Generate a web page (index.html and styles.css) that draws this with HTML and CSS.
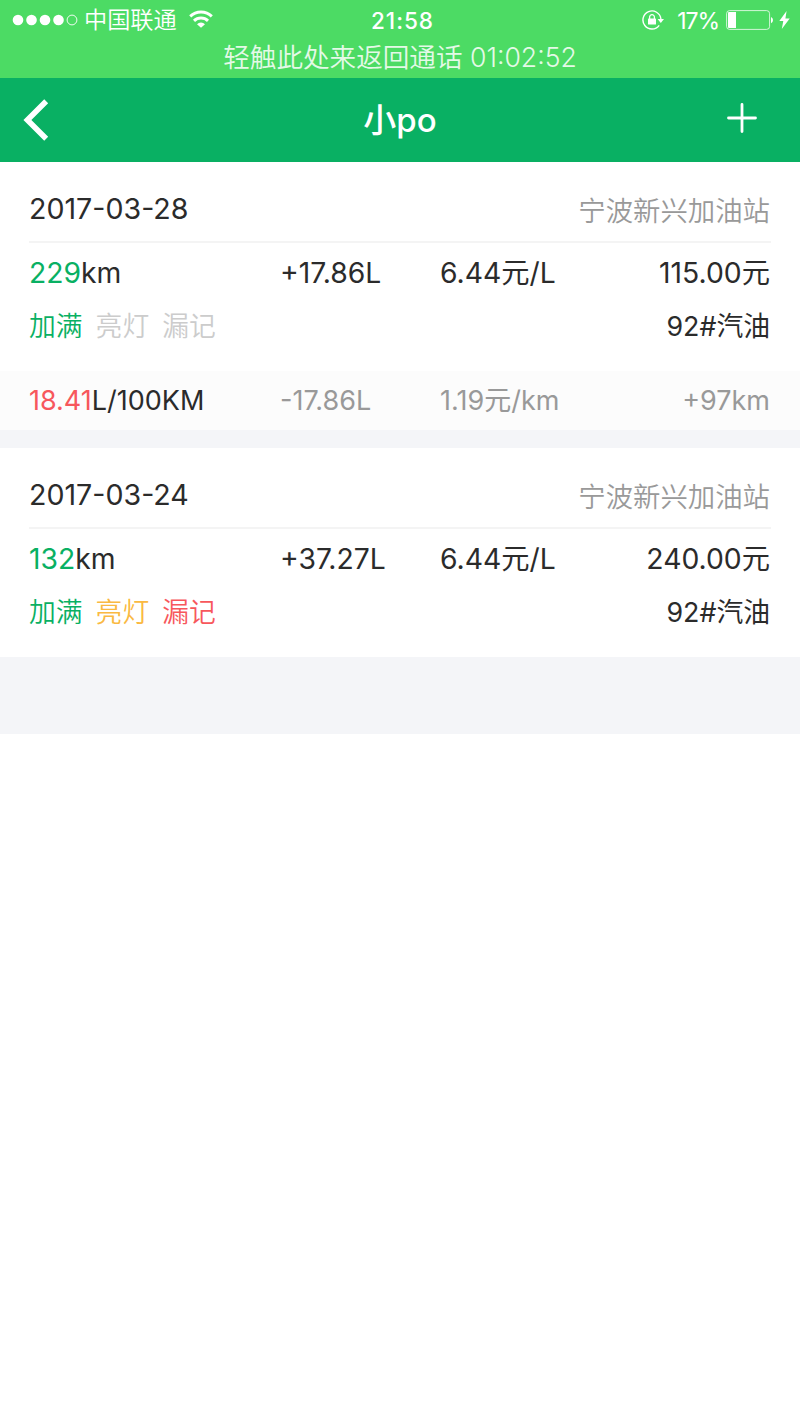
FILE: index.html
```
<!DOCTYPE html>
<html lang="zh-CN">
	<head>
		<meta charset="UTF-8">
		<title>小po</title>
		<link rel="stylesheet" href="styles.css">
	</head>
	<body>
		<div class="status">
			<div class="status-bar">
				<div class="status-left">
					<svg class="signal" width="66" height="12" viewBox="0 0 66 12">
						<g fill="#fff">
							<circle cx="6" cy="6" r="5.3"/>
							<circle cx="19.5" cy="6" r="5.3"/>
							<circle cx="33" cy="6" r="5.3"/>
							<circle cx="46.5" cy="6" r="5.3"/>
						</g>
						<circle cx="60" cy="6" r="4.9" fill="none" stroke="#fff" stroke-width="0.9"/>
					</svg>
					<span class="carrier">中国联通</span>
					<svg class="wifi" width="24" height="18" viewBox="0 0 24 18">
						<g fill="none" stroke="#fff" stroke-width="2.9">
							<path d="M1.2 6.4a15.3 15.3 0 0 1 21.6 0"/>
							<path d="M5 10.9a9.9 9.9 0 0 1 14 0"/>
						</g>
						<path d="M12 17.8l-4-3.6a5.7 5.7 0 0 1 8 0z" fill="#fff"/>
					</svg>
				</div>
				<span class="time">21:58</span>
				<div class="status-right">
					<svg class="lock" width="23" height="20" viewBox="0 0 23 20">
						<path d="M17.2 15.3A9 9 0 1 1 18.9 9" fill="none" stroke="#fff" stroke-width="1.4"/>
						<path d="M15.6 9h6.4l-3.2 4z" fill="#fff"/>
						<rect x="6" y="8.6" width="8" height="6" rx="0.6" fill="#fff"/>
						<path d="M7.6 9V7.1a2.4 2.4 0 0 1 4.8 0V9" fill="none" stroke="#fff" stroke-width="1.3"/>
					</svg>
					<span class="percent">17%</span>
					<svg class="battery" width="48" height="20" viewBox="0 0 48 20">
						<rect x="0.6" y="0.6" width="43" height="18.8" rx="3" fill="none" stroke="#fff" stroke-opacity="0.75"/>
						<path d="M3 2h7v16H3a1 1 0 0 1-1-1V3a1 1 0 0 1 1-1z" fill="#fff"/>
						<path d="M45 7a3.4 3.4 0 0 1 0 6.2z" fill="#fff"/>
					</svg>
					<svg class="bolt" width="11" height="18" viewBox="0 0 11 18">
						<path d="M7.6 0L0.3 10h4L2.8 18 10.7 7.6H6.4z" fill="#fff"/>
					</svg>
				</div>
			</div>
			<p class="call">轻触此处来返回通话 01:02:52</p>
		</div>

		<div class="header">
			<a class="back">
				<svg width="26" height="42" viewBox="0 0 26 42">
					<path d="M23.2 2.3L4.4 21l18.8 18.7" fill="none" stroke="#fff" stroke-width="5.6"/>
				</svg>
			</a>
			<h1>小po</h1>
			<a class="add">
				<svg width="30" height="30" viewBox="0 0 30 30">
					<path d="M1.5 15h27M15 1.5v27" stroke="#fff" stroke-width="2.8" stroke-linecap="round"/>
				</svg>
			</a>
		</div>

		<div class="list">
			<div class="item">
				<div class="item-head">
					<span class="date">2017-03-28</span>
					<span class="station">宁波新兴加油站</span>
				</div>
				<div class="row">
					<span><em class="green">229</em>km</span>
					<span>+17.86L</span>
					<span>6.44元/L</span>
					<span class="right">115.00元</span>
				</div>
				<div class="tags">
					<span class="green">加满</span>
					<span class="off">亮灯</span>
					<span class="off">漏记</span>
					<span class="oil">92#汽油</span>
				</div>
				<div class="row total">
					<span class="use"><em class="red">18.41</em>L/100KM</span>
					<span>-17.86L</span>
					<span>1.19元/km</span>
					<span class="right">+97km</span>
				</div>
			</div>
			<div class="item">
				<div class="item-head">
					<span class="date">2017-03-24</span>
					<span class="station">宁波新兴加油站</span>
				</div>
				<div class="row">
					<span><em class="green">132</em>km</span>
					<span>+37.27L</span>
					<span>6.44元/L</span>
					<span class="right">240.00元</span>
				</div>
				<div class="tags">
					<span class="green">加满</span>
					<span class="yellow">亮灯</span>
					<span class="red">漏记</span>
					<span class="oil">92#汽油</span>
				</div>
			</div>
		</div>
	</body>
</html>
```

FILE: styles.css
```
*{
	margin: 0;
	padding: 0;
	box-sizing: border-box;
}
body{
	background: #fff;
	color: #2b2b2b;
	font-family: Inter, "Noto Sans CJK SC", sans-serif;
	font-size: 28px;
	font-weight: 350;
}
svg{
	display: block;
	flex: none;
}
em{
	font-style: normal;
}

/* 状态栏 */
.status{
	height: 78px;
	background: #4cdb64;
	color: #fff;
}
.status-bar{
	display: grid;
	grid-template-columns: 1fr auto 1fr;
	align-items: center;
	height: 40px;
	padding: 0 10px 0 12px;
}
.status-left, .status-right{
	display: flex;
	align-items: center;
	height: 40px;
}
.status-right{
	justify-content: flex-end;
}
.carrier{
	margin-left: 6px;
	font-size: 23.2px;
	line-height: 40px;
}
.wifi{
	margin: -2px 0 0 12px;
}
.time{
	margin-left: 3px;
	font-size: 22.5px;
	font-weight: 500;
	letter-spacing: 1px;
}
.percent{
	margin: 1px 7px 0 12px;
	font-size: 23px;
	font-weight: 400;
	letter-spacing: -1.1px;
}
.bolt{
	margin-left: 5px;
}
.call{
	height: 34px;
	line-height: 35px;
	font-size: 26.6px;
	text-align: center;
	opacity: 0.85;
}

/* 标题 */
.header{
	display: grid;
	grid-template-columns: 1fr auto 1fr;
	align-items: center;
	height: 84px;
	padding: 0 43px 0 23px;
	background: #09b063;
	color: #fff;
}
.header h1{
	margin: -4px 0 0 20px;
	font-size: 33px;
	font-weight: 500;
}
.add{
	justify-self: end;
	margin-top: -4px;
}

/* 加油记录 */
.list{
	height: 572px;
	background: #f4f5f8;
}
.item{
	margin-bottom: 18px;
	background: #fff;
}
.item-head{
	display: flex;
	justify-content: space-between;
	height: 81px;
	margin: 0 29px;
	padding: 14px 1px 0 0;
	border-bottom: 2px solid #f4f4f4;
	line-height: 66px;
}
.date{
	font-size: 28.6px;
	font-weight: 400;
}
.station{
	color: #999;
	font-size: 27.4px;
	line-height: 70px;
}
.row{
	display: grid;
	grid-template-columns: 251px 160px 1fr auto;
	height: 60px;
	padding: 0 30px 0 29px;
	font-size: 28.3px;
	font-weight: 400;
	line-height: 60px;
	white-space: nowrap;
}
.tags{
	display: flex;
	height: 68px;
	padding: 0 30px 0 29px;
	font-size: 26.8px;
	line-height: 46px;
}
.tags span{
	margin-right: 13px;
}
.tags .oil{
	margin: 0 0 0 auto;
	font-weight: 400;
}
.total{
	height: 59px;
	background: #fcfcfc;
	color: #999;
	font-size: 27px;
	line-height: 60px;
}
.use{
	color: #2b2b2b;
}
.green{
	color: #09b063;
}
.red{
	color: #f7575c;
}
.yellow{
	color: #fab942;
}
.off{
	color: #ccc;
}
```
